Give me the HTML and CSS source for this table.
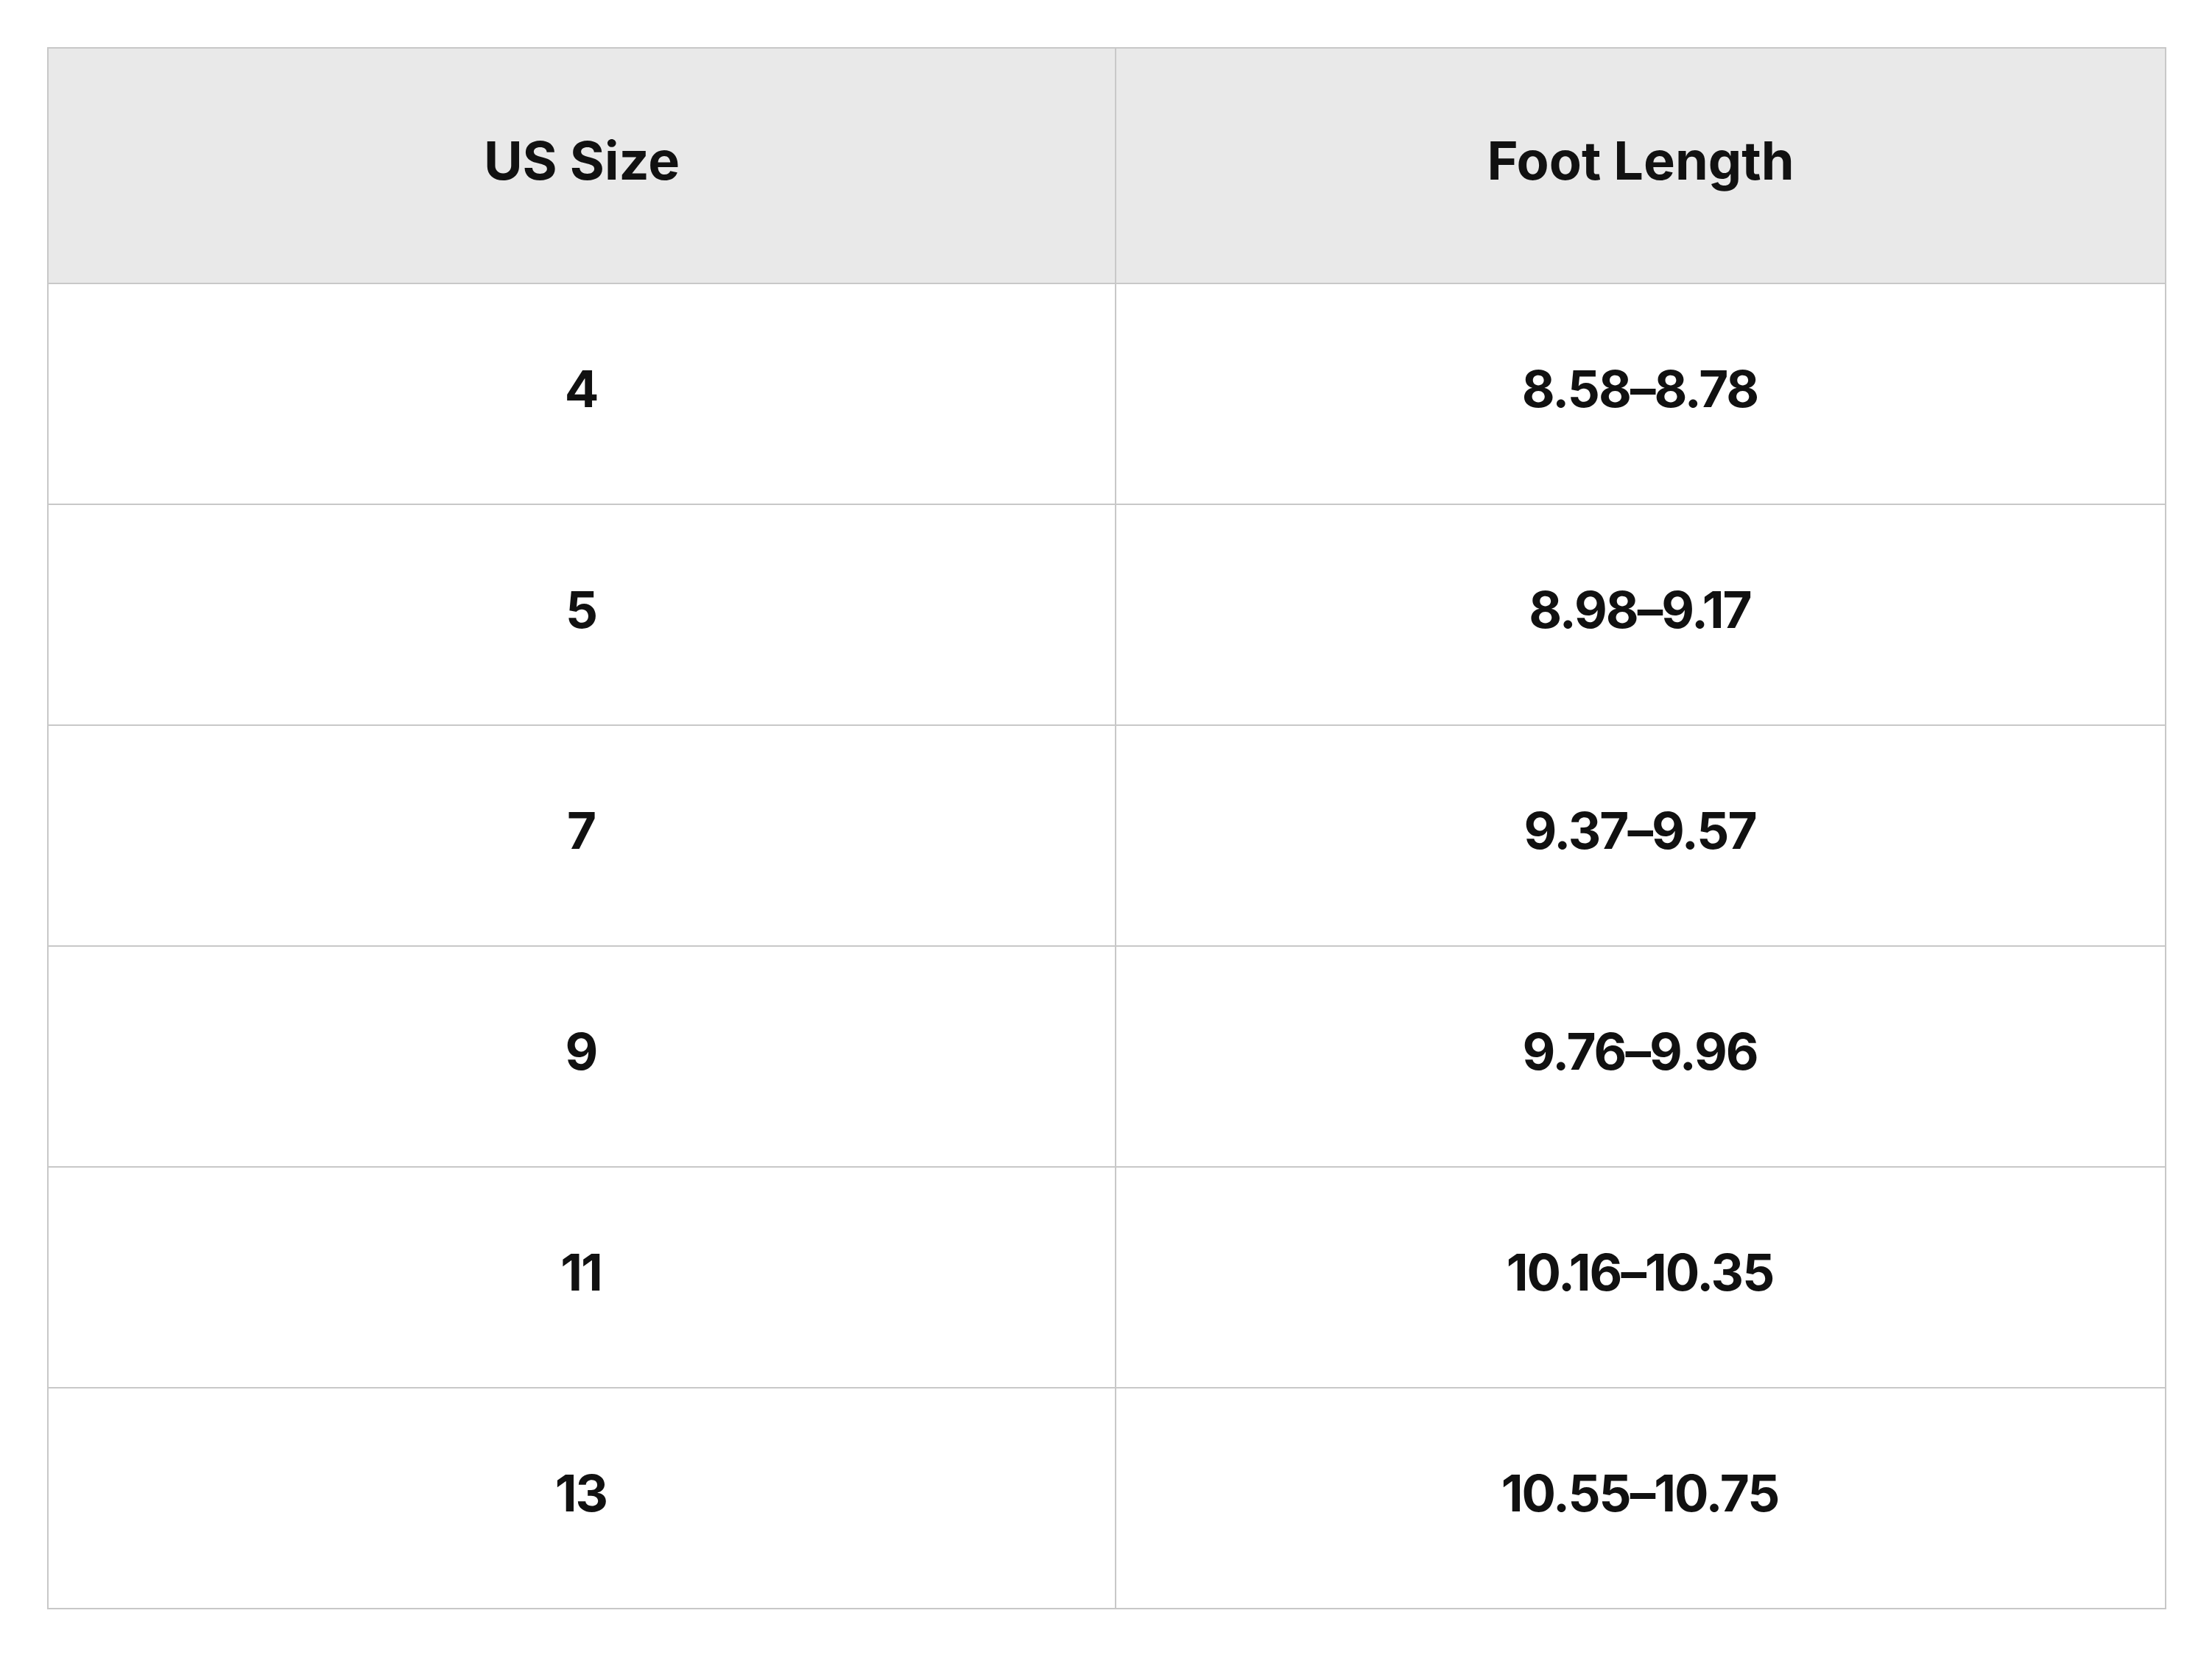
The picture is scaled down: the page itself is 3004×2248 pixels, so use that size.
FILE: index.html
```html
<!DOCTYPE html>
<html lang="en">
<head>
  <meta charset="UTF-8">
  <title>Size Chart</title>
  <link rel="stylesheet" href="styles.css">
</head>
<body>

  <div class="chart-wrap">
    <table class="size-chart">
      <colgroup>
        <col class="col-size">
        <col class="col-length">
      </colgroup>
      <thead>
        <tr>
          <th>US Size</th>
          <th>Foot Length</th>
        </tr>
      </thead>
      <tbody>
        <tr><td>4</td><td>8.58–8.78</td></tr>
        <tr><td>5</td><td>8.98–9.17</td></tr>
        <tr><td>7</td><td>9.37–9.57</td></tr>
        <tr><td>9</td><td>9.76–9.96</td></tr>
        <tr><td>11</td><td>10.16–10.35</td></tr>
        <tr><td>13</td><td>10.55–10.75</td></tr>
      </tbody>
    </table>
  </div>

</body>
</html>
```
FILE: styles.css
```css
body {
  margin: 0;
  background-color: #ffffff;
  font-family: Inter, "Noto Sans", sans-serif;
  color: #111111;
}

.chart-wrap {
  padding: 64px;
}

.size-chart {
  width: 2878px;
  table-layout: fixed;
  border-collapse: separate;
  border-spacing: 0;
  border-top: 2px solid #c8c8c8;
  border-left: 2px solid #c8c8c8;
}

.col-size {
  width: 1450px;
}

.col-length {
  width: 1426px;
}

.size-chart th,
.size-chart td {
  padding: 98px 0 112px;
  font-size: 72px;
  font-weight: 700;
  line-height: 88px;
  text-align: center;
  border-right: 2px solid #c8c8c8;
  border-bottom: 2px solid #c8c8c8;
}

.size-chart td {
  font-size: 69px;
  letter-spacing: -2px;
  padding-right: 2px;
}

.size-chart th {
  padding: 108px 0 122px;
  background-color: #e9e9e9;
}
```
